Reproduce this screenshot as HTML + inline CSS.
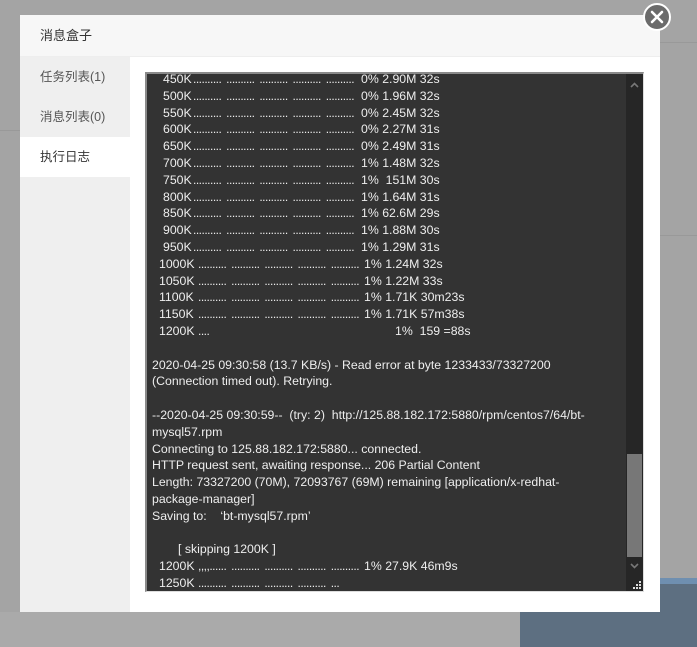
<!DOCTYPE html>
<html><head><meta charset="utf-8"><style>
*{margin:0;padding:0;box-sizing:border-box}
body{width:697px;height:647px;overflow:hidden;background:#a4a4a4;font-family:"Liberation Sans","Noto Sans CJK SC",sans-serif;position:relative}
.abs{position:absolute}
#modal{left:20px;top:15px;width:640px;height:597px;background:#fff}
#hd{left:0;top:0;width:640px;height:42px;background:#f7f7f7;border-bottom:1px solid #eee;font-size:13px;color:#333;line-height:42px;padding-left:20px}
#side{left:0;top:42px;width:110px;height:555px;background:#efefef}
.it{position:absolute;left:0;width:110px;height:40px;line-height:40px;padding-left:20px;font-size:12.5px;color:#555}
#ta{left:125px;top:57px;width:499px;height:520px;background:#333;border-top:2px solid #8a8a8a;border-left:2px solid #8a8a8a;border-right:1px solid #ddd;border-bottom:1px solid #ddd;overflow:hidden}
#c{position:absolute;left:-147px;top:-3px;width:700px;color:#eee;font-size:12.3px}
.l{position:relative;height:16.8px;line-height:16.8px;white-space:pre}
.l span{position:absolute;top:0}
.d{letter-spacing:-0.5px;word-spacing:2px;font-size:12px}
#sb{left:479px;top:0;width:17px;height:518px;background:#262626}
#th{left:1px;top:380px;width:15px;height:103px;background:#777}
</style></head><body>
<div class="abs" style="left:660px;top:42px;width:37px;height:1px;background:#999"></div>
<div class="abs" style="left:660px;top:235px;width:37px;height:1px;background:#999"></div>
<div class="abs" style="left:0;top:130px;width:20px;height:1px;background:#999"></div>
<div class="abs" style="left:520px;top:580px;width:177px;height:67px;background:#5d6f81"></div>
<div class="abs" style="left:520px;top:578px;width:177px;height:6px;background:#6f8fb0"></div>
<div class="abs" style="left:504px;top:615px;font-size:12px;color:#444">1 -</div>
<div class="abs" style="left:0;top:612px;width:520px;height:35px;background:#aaa"></div>

<div id="modal" class="abs">
<div id="hd" class="abs">消息盒子</div>
<div id="side" class="abs">
<div class="it" style="top:0">任务列表(1)</div>
<div class="it" style="top:40px">消息列表(0)</div>
<div class="it" style="top:80px;background:#fff;color:#333">执行日志</div>
</div>
<div id="ta" class="abs">
<div id="c">
<div class="l"><span style="left:163px">450K</span><span class="d" style="left:193px">.......... .......... .......... .......... ..........</span><span style="left:361px">0% 2.90M 32s</span></div>
<div class="l"><span style="left:163px">500K</span><span class="d" style="left:193px">.......... .......... .......... .......... ..........</span><span style="left:361px">0% 1.96M 32s</span></div>
<div class="l"><span style="left:163px">550K</span><span class="d" style="left:193px">.......... .......... .......... .......... ..........</span><span style="left:361px">0% 2.45M 32s</span></div>
<div class="l"><span style="left:163px">600K</span><span class="d" style="left:193px">.......... .......... .......... .......... ..........</span><span style="left:361px">0% 2.27M 31s</span></div>
<div class="l"><span style="left:163px">650K</span><span class="d" style="left:193px">.......... .......... .......... .......... ..........</span><span style="left:361px">0% 2.49M 31s</span></div>
<div class="l"><span style="left:163px">700K</span><span class="d" style="left:193px">.......... .......... .......... .......... ..........</span><span style="left:361px">1% 1.48M 32s</span></div>
<div class="l"><span style="left:163px">750K</span><span class="d" style="left:193px">.......... .......... .......... .......... ..........</span><span style="left:361px">1%  151M 30s</span></div>
<div class="l"><span style="left:163px">800K</span><span class="d" style="left:193px">.......... .......... .......... .......... ..........</span><span style="left:361px">1% 1.64M 31s</span></div>
<div class="l"><span style="left:163px">850K</span><span class="d" style="left:193px">.......... .......... .......... .......... ..........</span><span style="left:361px">1% 62.6M 29s</span></div>
<div class="l"><span style="left:163px">900K</span><span class="d" style="left:193px">.......... .......... .......... .......... ..........</span><span style="left:361px">1% 1.88M 30s</span></div>
<div class="l"><span style="left:163px">950K</span><span class="d" style="left:193px">.......... .......... .......... .......... ..........</span><span style="left:361px">1% 1.29M 31s</span></div>
<div class="l"><span style="left:159px">1000K</span><span class="d" style="left:198px">.......... .......... .......... .......... ..........</span><span style="left:364px">1% 1.24M 32s</span></div>
<div class="l"><span style="left:159px">1050K</span><span class="d" style="left:198px">.......... .......... .......... .......... ..........</span><span style="left:364px">1% 1.22M 33s</span></div>
<div class="l"><span style="left:159px">1100K</span><span class="d" style="left:198px">.......... .......... .......... .......... ..........</span><span style="left:364px">1% 1.71K 30m23s</span></div>
<div class="l"><span style="left:159px">1150K</span><span class="d" style="left:198px">.......... .......... .......... .......... ..........</span><span style="left:364px">1% 1.71K 57m38s</span></div>
<div class="l"><span style="left:159px">1200K</span><span class="d" style="left:198px">....</span><span style="left:395px">1%  159 =88s</span></div>
<div class="l"></div>
<div class="l"><span style="left:152px">2020-04-25 09:30:58 (13.7 KB/s) - Read error at byte 1233433/73327200</span></div>
<div class="l"><span style="left:152px">(Connection timed out). Retrying.</span></div>
<div class="l"></div>
<div class="l"><span style="left:152px">--2020-04-25 09:30:59--  (try: 2)  http://125.88.182.172:5880/rpm/centos7/64/bt-</span></div>
<div class="l"><span style="left:152px">mysql57.rpm</span></div>
<div class="l"><span style="left:152px">Connecting to 125.88.182.172:5880... connected.</span></div>
<div class="l"><span style="left:152px">HTTP request sent, awaiting response... 206 Partial Content</span></div>
<div class="l"><span style="left:152px">Length: 73327200 (70M), 72093767 (69M) remaining [application/x-redhat-</span></div>
<div class="l"><span style="left:152px">package-manager]</span></div>
<div class="l"><span style="left:152px">Saving to:    ‘bt-mysql57.rpm’</span></div>
<div class="l"></div>
<div class="l"><span style="left:178px">[ skipping 1200K ]</span></div>
<div class="l"><span style="left:159px">1200K</span><span class="d" style="left:198px">,,,,...... .......... .......... .......... ..........</span><span style="left:364px">1% 27.9K 46m9s</span></div>
<div class="l"><span style="left:159px">1250K</span><span class="d" style="left:198px">.......... .......... .......... .......... ...</span></div>
</div>
<div id="sb" class="abs"><div id="th" class="abs"></div>
<svg class="abs" style="left:2px;top:6px" width="13" height="10"><path d="M3 7L6.5 3.5L10 7" stroke="#777" stroke-width="1.6" fill="none"/></svg>
<svg class="abs" style="left:2px;top:487px" width="13" height="10"><path d="M3 3L6.5 6.5L10 3" stroke="#777" stroke-width="1.6" fill="none"/></svg>
</div>
<svg class="abs" style="left:485px;top:506px" width="10" height="10"><g fill="#ddd"><rect x="7" y="1" width="2" height="2"/><rect x="4" y="4" width="2" height="2"/><rect x="7" y="4" width="2" height="2"/><rect x="1" y="7" width="2" height="2"/><rect x="4" y="7" width="2" height="2"/><rect x="7" y="7" width="2" height="2"/></g></svg>
</div>
</div>
<svg class="abs" style="left:642px;top:2px" width="30" height="30"><circle cx="15" cy="15" r="13" fill="#6b6b6b" stroke="#fff" stroke-width="2"/><path d="M10 10L20 20M20 10L10 20" stroke="#fff" stroke-width="2.6" stroke-linecap="round"/></svg>
</body></html>
